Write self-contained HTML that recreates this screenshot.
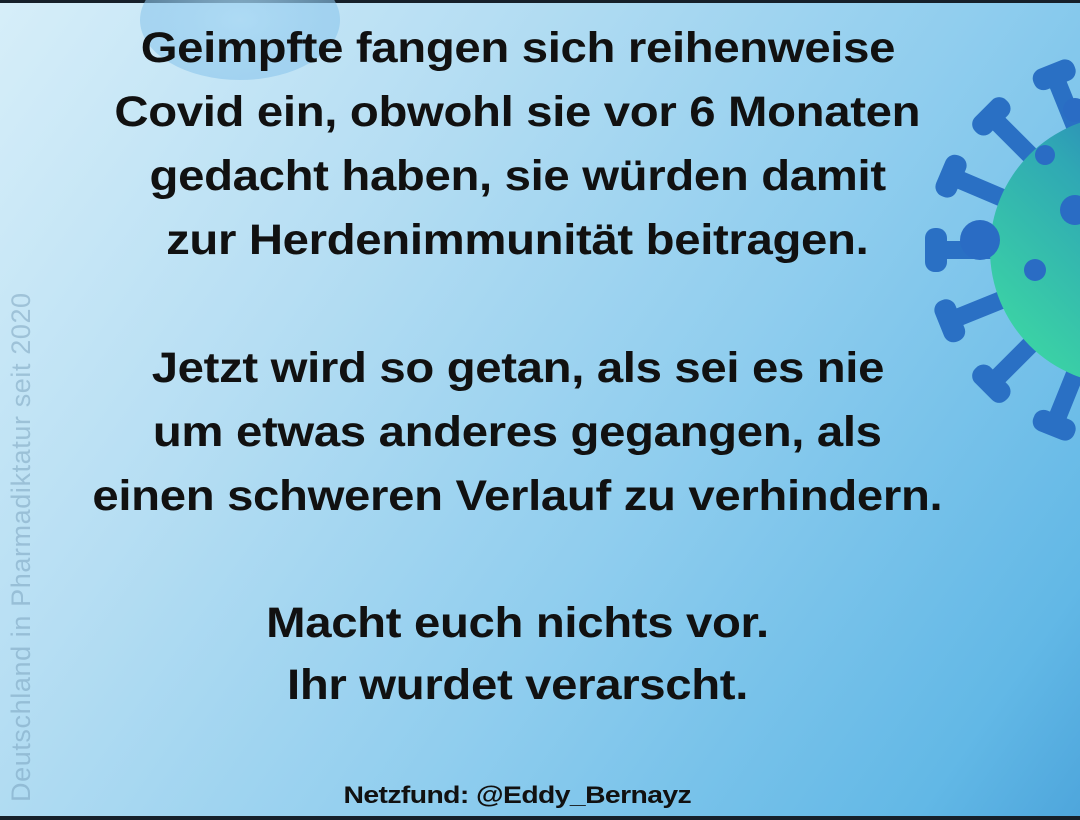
<!DOCTYPE html>
<html><head><meta charset="utf-8"><style>
html,body{margin:0;padding:0}
body{width:1080px;height:820px;position:relative;overflow:hidden;background:#16202a}
#bg{position:absolute;left:0;top:3px;width:1080px;height:813px;background:linear-gradient(125deg,#d6eef9 0%,#b6def3 30%,#8fcdee 60%,#62b8e6 90%,#4ea6dc 100%)}
.t{position:absolute;left:0;width:1035px;text-align:center;font-family:"Liberation Sans",sans-serif;font-weight:bold;color:#111;font-size:43px;line-height:44px;letter-spacing:-0.3px}
.t span{display:inline-block;transform:scaleX(1.1)}
.wm{position:absolute;left:6px;top:802px;transform-origin:0 0;transform:rotate(-90deg);font-family:"Liberation Sans",sans-serif;font-size:27px;color:rgba(110,150,180,0.45);white-space:nowrap;letter-spacing:0.6px}
</style></head><body>
<div id="bg"></div>
<svg style="position:absolute;left:0;top:0" width="1080" height="820">
<defs>
<linearGradient id="g" x1="0" y1="1" x2="1" y2="0"><stop offset="0" stop-color="#3fe0a0"/><stop offset="0.55" stop-color="#2fa8b4"/><stop offset="1" stop-color="#2a5cc0"/></linearGradient>
<radialGradient id="b" cx="0.5" cy="0.5" r="0.5"><stop offset="0" stop-color="#a8d8f4" stop-opacity="0.8"/><stop offset="1" stop-color="#8cc6ec" stop-opacity="0.6"/></radialGradient>
</defs>
<ellipse cx="240" cy="20" rx="100" ry="60" fill="url(#b)"/>
<g fill="#2a70c4">
<g transform="translate(1125,250)">
<g id="sp"><rect x="-9" y="-190" width="18" height="75" rx="4"/><rect x="-22" y="-200" width="44" height="22" rx="10"/></g>
<use href="#sp" transform="rotate(-22)"/><use href="#sp" transform="rotate(-45)"/><use href="#sp" transform="rotate(-67)"/><use href="#sp" transform="rotate(-90)"/><use href="#sp" transform="rotate(-112)"/><use href="#sp" transform="rotate(-135)"/><use href="#sp" transform="rotate(-158)"/><use href="#sp" transform="rotate(-180)"/><use href="#sp" transform="rotate(0)"/>
</g></g>
<circle cx="1125" cy="250" r="135" fill="url(#g)"/>
<g fill="#2a6cc4"><circle cx="1045" cy="155" r="10"/><circle cx="1035" cy="270" r="11"/><circle cx="1075" cy="210" r="15"/><circle cx="1075" cy="110" r="12"/><circle cx="980" cy="240" r="20"/></g>
</svg>
<div class="wm">Deutschland in Pharmadiktatur seit 2020</div>
<div class="t" style="top:26px"><span>Geimpfte fangen sich reihenweise</span></div>
<div class="t" style="top:90px"><span>Covid ein, obwohl sie vor 6 Monaten</span></div>
<div class="t" style="top:154px"><span>gedacht haben, sie würden damit</span></div>
<div class="t" style="top:218px"><span>zur Herdenimmunität beitragen.</span></div>
<div class="t" style="top:346px"><span>Jetzt wird so getan, als sei es nie</span></div>
<div class="t" style="top:410px"><span>um etwas anderes gegangen, als</span></div>
<div class="t" style="top:474px"><span>einen schweren Verlauf zu verhindern.</span></div>
<div class="t" style="top:601px"><span>Macht euch nichts vor.</span></div>
<div class="t" style="top:663px"><span>Ihr wurdet verarscht.</span></div>
<div class="t" style="top:782px;font-size:24px;line-height:28px;letter-spacing:-0.5px"><span style="transform:scaleX(1.18)">Netzfund: @Eddy_Bernayz</span></div>
</body></html>
